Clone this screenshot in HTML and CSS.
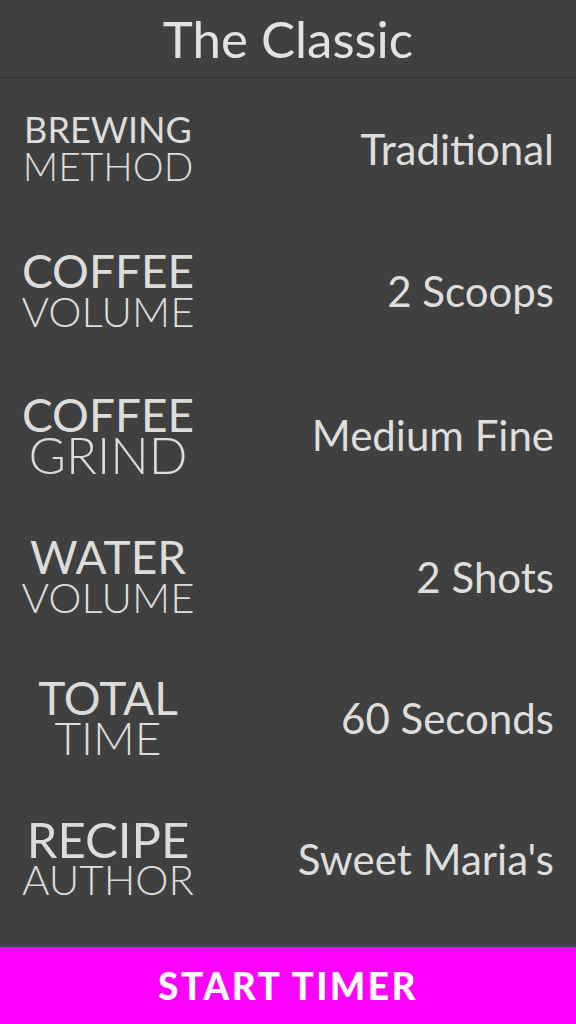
FILE: index.html
```html
<!DOCTYPE html>
<html>
<head>
<meta charset="utf-8">
<link rel="stylesheet" href="styles.css">
</head>
<body>
<div class="app">
  <header class="header"><h1 class="title">The Classic</h1></header>
  <main class="list">
    <div class="row">
      <div class="label"><span class="l1 s-brewing">BREWING</span><span class="l2 s-method">METHOD</span></div>
      <div class="value">Traditional</div>
    </div>
    <div class="row row-b">
      <div class="label"><span class="l1 s-coffee">COFFEE</span><span class="l2 s-volume">VOLUME</span></div>
      <div class="value">2 Scoops</div>
    </div>
    <div class="row row-c">
      <div class="label"><span class="l1 s-coffee">COFFEE</span><span class="l2 s-grind">GRIND</span></div>
      <div class="value">Medium Fine</div>
    </div>
    <div class="row">
      <div class="label"><span class="l1 s-water">WATER</span><span class="l2 s-volume">VOLUME</span></div>
      <div class="value">2 Shots</div>
    </div>
    <div class="row row-e">
      <div class="label"><span class="l1 s-total">TOTAL</span><span class="l2 s-time">TIME</span></div>
      <div class="value">60 Seconds</div>
    </div>
    <div class="row">
      <div class="label"><span class="l1 s-recipe">RECIPE</span><span class="l2 s-author">AUTHOR</span></div>
      <div class="value">Sweet Maria's</div>
    </div>
  </main>
  <button class="start">START TIMER</button>
</div>
</body>
</html>
```
FILE: styles.css
```css
html, body {
  margin: 0;
  padding: 0;
  background: #404040;
}
.app {
  width: 576px;
  height: 1024px;
  display: flex;
  flex-direction: column;
  background: #404040;
  font-family: "Lato", "Liberation Sans", sans-serif;
  color: #dedede;
}
.header {
  height: 77px;
  border-bottom: 1px solid #2f2f2f;
  display: flex;
  align-items: center;
  justify-content: center;
  flex-shrink: 0;
}
.title {
  margin: 0;
  font-weight: 400;
  font-size: 51px;
  line-height: 1;
  color: #e2e2e2;
}
.list {
  flex: 1;
  display: flex;
  flex-direction: column;
  padding-top: 1px;
}
.row {
  height: 140px;
  display: flex;
  align-items: center;
  justify-content: space-between;
  padding: 0 22px 0 24px;
}
.row-b { height: 143px; }
.row-c { height: 145px; }
.row-e { height: 142px; }
.label {
  width: 168px;
  display: flex;
  flex-direction: column;
  align-items: center;
  color: #dcdcdc;
}
.l1 {
  font-weight: 400;
  line-height: 40px;
  white-space: nowrap;
}
.l2 {
  font-weight: 300;
  line-height: 40px;
  white-space: nowrap;
}
.s-brewing { font-size: 36px; line-height: 34px; }
.s-method { font-size: 39px; }
.s-coffee { font-size: 46px; }
.s-volume { font-size: 42px; }
.s-grind { font-size: 51px; }
.s-water { font-size: 46px; }
.s-total { font-size: 46px; }
.s-time { font-size: 46px; }
.s-recipe { font-size: 49px; }
.s-author { font-size: 42px; }
.value {
  font-size: 42px;
  font-weight: 400;
  color: #dedede;
  white-space: nowrap;
}
.start {
  height: 77px;
  flex-shrink: 0;
  border: none;
  margin: 0;
  background: #ff00ff;
  color: #ffffff;
  font-family: "Lato", "Liberation Sans", sans-serif;
  font-weight: 900;
  font-size: 37px;
  letter-spacing: 2.5px;
  padding: 0;
  width: 100%;
}
```
